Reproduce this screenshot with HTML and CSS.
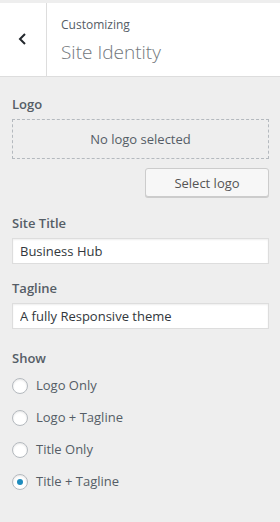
FILE: index.html
```html
<!DOCTYPE html>
<html lang="en">
<head>
    <meta charset="UTF-8">
    <meta name="viewport" content="width=device-width, initial-scale=1.0">
    <title>Customizing - Site Identity</title>
    <link rel="stylesheet" href="styles.css">
</head>
<body>
    <div class="header">
        <div class="back">
            <svg width="12" height="14" viewBox="0 0 12 14"><path d="M8 2 L3 7 L8 12" fill="none" stroke="#23282d" stroke-width="2"/></svg>
        </div>
        <div class="heading">
            <div class="sub">Customizing</div>
            <div class="title">Site Identity</div>
        </div>
    </div>

    <div class="panel">
        <div class="label">Logo</div>
        <div class="placeholder">No logo selected</div>
        <div class="actions">
            <button class="button">Select logo</button>
        </div>

        <div class="label">Site Title</div>
        <input class="field" type="text" value="Business Hub">

        <div class="label">Tagline</div>
        <input class="field last" type="text" value="A fully Responsive theme">

        <div class="label">Show</div>
        <div class="radios">
            <label class="radio"><span class="dot"></span>Logo Only</label>
            <label class="radio"><span class="dot"></span>Logo + Tagline</label>
            <label class="radio"><span class="dot"></span>Title Only</label>
            <label class="radio"><span class="dot checked"></span>Title + Tagline</label>
        </div>
    </div>
</body>
</html>
```

FILE: styles.css
```css
body {
    margin: 0;
    background-color: #eeeeee;
    color: #555d66;
    font-family: "Open Sans", "Noto Sans", Arial, sans-serif;
    font-size: 13px;
    height: 522px;
    overflow: hidden;
}
.header {
    display: flex;
    background-color: #fff;
    border-top: 3px solid #eeeeee;
    border-bottom: 1px solid #dddddd;
    height: 73px;
}
.back {
    width: 47px;
    border-right: 1px solid #dddddd;
    display: flex;
    align-items: center;
    justify-content: center;
    padding-bottom: 2px;
    box-sizing: border-box;
}
.heading {
    padding: 13px 0 0 14px;
}
.sub {
    font-size: 12px;
    line-height: 18px;
    color: #555d66;
}
.title {
    font-size: 19px;
    font-weight: 300;
    line-height: 28px;
    margin-top: 4px;
    color: #72777c;
}
.panel {
    padding: 17px 11px 0 12px;
}
.label {
    font-size: 13px;
    font-weight: 600;
    color: #555d66;
    line-height: 20px;
    margin-bottom: 5px;
}
.placeholder {
    border: 1px dashed #b4b9be;
    height: 38px;
    display: flex;
    align-items: center;
    justify-content: center;
    font-size: 13px;
    color: #555d66;
    margin-top: 2px;
}
.actions {
    display: flex;
    justify-content: flex-end;
    margin: 9px 0 16px;
}
.button {
    width: 124px;
    height: 29px;
    font-family: inherit;
    font-size: 13px;
    color: #555;
    background-color: #f7f7f7;
    border: 1px solid #cccccc;
    border-radius: 3px;
    box-shadow: 0 1px 0 #cccccc;
}
.field {
    display: block;
    width: 100%;
    box-sizing: border-box;
    height: 26px;
    margin: 0 0 14px;
    padding: 0 7px;
    font-family: inherit;
    font-size: 13px;
    color: #32373c;
    background-color: #fff;
    border: 1px solid #dddddd;
    box-shadow: inset 0 1px 2px rgba(0,0,0,0.07);
}
.field.last {
    margin-bottom: 19px;
}
.radios {
    display: flex;
    flex-direction: column;
    gap: 11px;
    margin-top: 7px;
}
.radio {
    display: flex;
    align-items: center;
    gap: 8px;
    line-height: 21px;
    font-size: 13px;
}
.dot {
    width: 14px;
    height: 14px;
    border: 1px solid #b4b9be;
    border-radius: 50%;
    background-color: #fff;
    box-shadow: inset 0 1px 2px rgba(0,0,0,0.1);
    display: flex;
    align-items: center;
    justify-content: center;
}
.dot.checked::before {
    content: "";
    width: 6px;
    height: 6px;
    border-radius: 50%;
    background-color: #1e8cbe;
}
```
